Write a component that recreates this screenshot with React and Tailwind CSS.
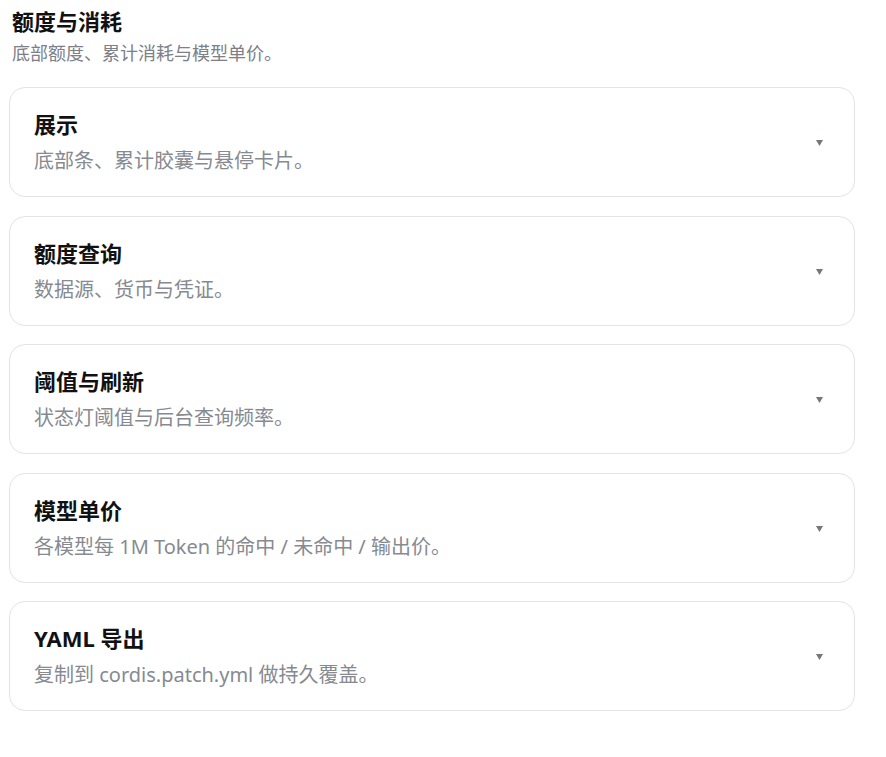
const sections = [
  { title: '展示', desc: '底部条、累计胶囊与悬停卡片。' },
  { title: '额度查询', desc: '数据源、货币与凭证。' },
  { title: '阈值与刷新', desc: '状态灯阈值与后台查询频率。' },
  { title: '模型单价', desc: '各模型每 1M Token 的命中 / 未命中 / 输出价。' },
  { title: 'YAML 导出', desc: '复制到 cordis.patch.yml 做持久覆盖。' },
];

function Caret() {
  return (
    <svg width="7" height="6" viewBox="0 0 7 6" className="shrink-0 mt-[2px]">
      <path d="M0 0h7L3.5 6z" fill="#74777d" />
    </svg>
  );
}

function SectionCard({ title, desc }) {
  return (
    <div className="flex items-center justify-between h-[110px] rounded-[16px] border border-[#e3e3e3] bg-white pl-[24px] pr-[31px]">
      <div className="flex flex-col">
        <h3 className="text-[22px] leading-[30px] font-bold text-[#111]">{title}</h3>
        <p className="mt-[8px] text-[20px] leading-[28px] text-[#868a91]">{desc}</p>
      </div>
      <Caret />
    </div>
  );
}

export default function App() {
  return (
    <div
      className="min-h-screen bg-white pt-[6px] pl-[9px] pr-[31px]"
      style={{ fontFamily: '"Noto Sans", "Noto Sans CJK SC", sans-serif' }}
    >
      <div className="pl-[3px]">
        <h2 className="text-[22px] leading-[30px] font-bold text-[#111]">额度与消耗</h2>
        <p className="mt-[4px] text-[18px] leading-[26px] text-[#7c8088]">底部额度、累计消耗与模型单价。</p>
      </div>
      <div className="mt-[21px] flex flex-col gap-[18.5px]">
        {sections.map((s) => (
          <SectionCard key={s.title} title={s.title} desc={s.desc} />
        ))}
      </div>
    </div>
  );
}
